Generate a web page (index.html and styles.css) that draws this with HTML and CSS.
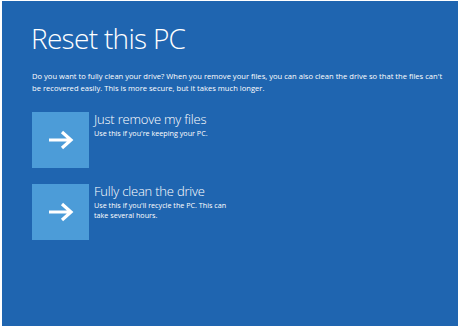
FILE: index.html
```html
<!DOCTYPE html>
<html>
<head>
<meta charset="utf-8">
<link rel="stylesheet" href="styles.css">
</head>
<body>
<div class="screen">
  <h1 class="title">Reset this PC</h1>
  <p class="intro">Do you want to fully clean your drive? When you remove your files, you can also clean the drive so that the files can't be recovered easily. This is more secure, but it takes much longer.</p>
  <div class="options">
    <div class="option">
      <div class="tile">
        <svg width="28" height="22" viewBox="0 0 28 22"><path d="M2 11H24M15 3L24 11L15 19" fill="none" stroke="#fff" stroke-width="3.2"/></svg>
      </div>
      <div class="text">
        <div class="label">Just remove my files</div>
        <div class="desc">Use this if you're keeping your PC.</div>
      </div>
    </div>
    <div class="option">
      <div class="tile">
        <svg width="28" height="22" viewBox="0 0 28 22"><path d="M2 11H24M15 3L24 11L15 19" fill="none" stroke="#fff" stroke-width="3.2"/></svg>
      </div>
      <div class="text">
        <div class="label">Fully clean the drive</div>
        <div class="desc">Use this if you'll recycle the PC. This can<br>take several hours.</div>
      </div>
    </div>
  </div>
</div>
</body>
</html>
```
FILE: styles.css
```css
html, body {
  margin: 0;
  padding: 0;
  background: #ffffff;
}
body {
  width: 463px;
  height: 330px;
  padding: 1px 5px 4px 2px;
  box-sizing: border-box;
  font-family: "Open Sans", "Noto Sans", sans-serif;
  color: #ffffff;
}
.screen {
  background: #1f65b0;
  height: 100%;
  box-sizing: border-box;
  padding: 19px 10px 0 29px;
}
.title {
  margin: 0;
  font-weight: 300;
  font-size: 28px;
  line-height: 36px;
  letter-spacing: -0.7px;
}
.intro {
  margin: 14px 0 0 1px;
  font-size: 7.6px;
  line-height: 12px;
  width: 420px;
}
.options {
  margin-top: 18px;
  margin-left: 1px;
  display: flex;
  flex-direction: column;
  gap: 16px;
}
.option {
  display: flex;
  gap: 5px;
}
.tile {
  width: 57px;
  height: 56px;
  background: #4c9cd8;
  display: flex;
  align-items: center;
  justify-content: center;
  flex-shrink: 0;
}
.label {
  font-weight: 300;
  font-size: 13px;
  line-height: 15px;
  letter-spacing: -0.2px;
}
.desc {
  font-size: 7.2px;
  line-height: 10px;
  margin-top: 1px;
}
```
